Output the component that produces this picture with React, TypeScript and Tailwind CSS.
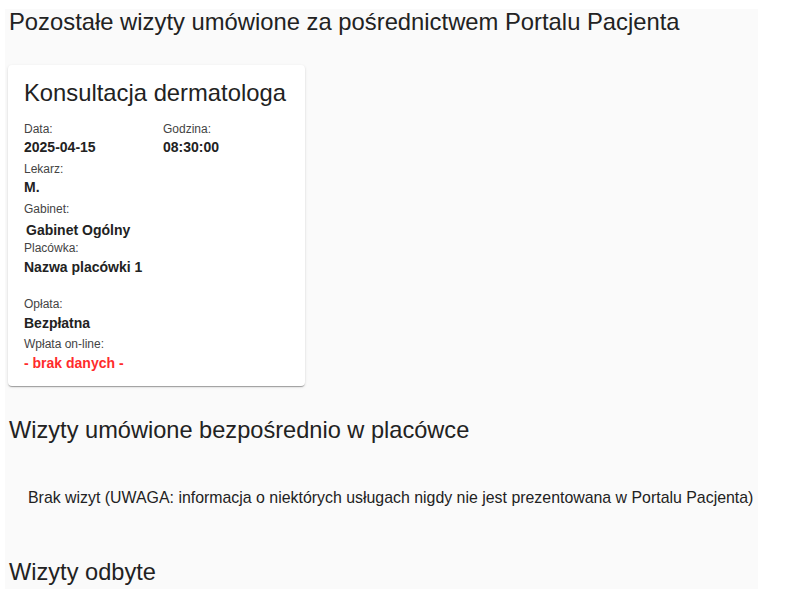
const font = { fontFamily: '"Liberation Sans", Arial, sans-serif' };

function Field({
  label,
  value,
  className = "",
  valueClassName = "",
}: {
  label: string;
  value: string;
  className?: string;
  valueClassName?: string;
}) {
  return (
    <div className={className}>
      <div className="text-xs leading-4 text-[#444]">{label}</div>
      <div className={`text-sm leading-5 font-bold text-[#222] ${valueClassName}`}>
        {value}
      </div>
    </div>
  );
}

function VisitCard() {
  return (
    <div className="ml-[3px] w-[297px] rounded bg-white px-4 pt-4 pb-[13px] shadow-[0_2px_1px_-1px_rgba(0,0,0,0.2),0_1px_1px_0_rgba(0,0,0,0.14),0_1px_3px_0_rgba(0,0,0,0.12)]">
      <h3 className="h-6 text-[23.8px] leading-6 text-[#222]">Konsultacja dermatologa</h3>

      <div className="mt-[16px] flex">
        <Field label="Data:" value="2025-04-15" className="w-[139px]" />
        <Field label="Godzina:" value="08:30:00" />
      </div>

      <Field label="Lekarz:" value="M." className="mt-1" />
      <Field
        label="Gabinet:"
        value="Gabinet Ogólny"
        className="mt-1"
        valueClassName="mt-[3px] pl-[2px]"
      />
      <Field label="Placówka:" value="Nazwa placówki 1" valueClassName="mt-px" />
      <Field label="Opłata:" value="Bezpłatna" className="mt-[19px]" valueClassName="mt-px" />
      <Field
        label="Wpłata on-line:"
        value="- brak danych -"
        className="mt-[3px]"
        valueClassName="mt-px !text-[#ff2b2b]"
      />
    </div>
  );
}

export default function App() {
  return (
    <div className="min-h-[603px] bg-white pt-[9px]" style={font}>
      <div className="ml-[5px] h-[580px] w-[753px] overflow-hidden bg-[#fafafa]">
        <h1 className="pt-px pl-[4px] text-[23.8px] leading-none whitespace-nowrap text-[#222]">
          Pozostałe wizyty umówione za pośrednictwem Portalu Pacjenta
        </h1>

        <div className="mt-[31px]">
          <VisitCard />
        </div>

        <h2 className="mt-[33px] pl-[4px] text-[23.6px] leading-none text-[#222]">
          Wizyty umówione bezpośrednio w placówce
        </h2>

        <p className="mt-[44px] pl-[23px] text-[15.9px] leading-6 whitespace-nowrap text-[#222]">
          Brak wizyt (UWAGA: informacja o niektórych usługach nigdy nie jest prezentowana w Portalu Pacjenta)
        </p>

        <h2 className="mt-[51px] pl-[4px] text-[23.6px] leading-none text-[#222]">
          Wizyty odbyte
        </h2>
      </div>
    </div>
  );
}
